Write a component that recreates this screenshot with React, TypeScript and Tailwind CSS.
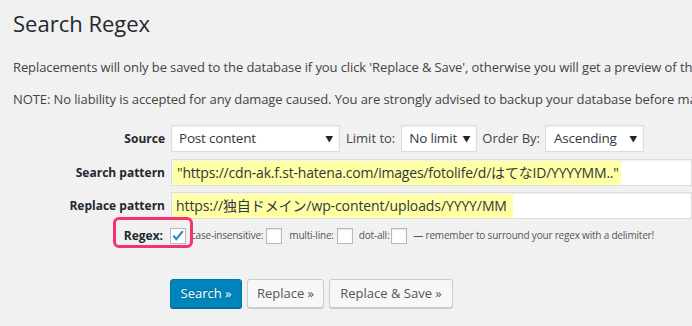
import React from 'react'

const font = { fontFamily: '"Open Sans", "Noto Sans CJK JP", sans-serif' }

function Select({ label, width, pad }: { label: string; width: string; pad: string }) {
  return (
    <div
      className={`${width} h-[27px] flex items-center justify-between ${pad} bg-white border border-[#ddd] shadow-[inset_0_1px_2px_rgba(0,0,0,0.07)] text-[13.5px] tracking-[-0.2px] text-[#32373c]`}
    >
      <span>{label}</span>
      <span className="text-[8px] text-[#222]">▼</span>
    </div>
  )
}

function Box() {
  return <span className="block w-[16px] h-[16px] bg-white border border-[#b4b9be] shadow-[inset_0_1px_2px_rgba(0,0,0,0.1)]" />
}

function Button({ children, primary, width }: { children: React.ReactNode; primary?: boolean; width: string }) {
  return (
    <button
      className={
        primary
          ? `${width} h-[29px] rounded-[3px] bg-[#0085ba] border border-[#0073aa] shadow-[0_1px_0_#006799] text-white text-[13px] [text-shadow:0_-1px_1px_#006799]`
          : `${width} h-[29px] rounded-[3px] bg-[#f7f7f7] border border-[#ccc] shadow-[0_1px_0_#ccc] text-[#555] text-[13px]`
      }
    >
      {children}
    </button>
  )
}

export default function App() {
  return (
    <div className="relative w-[692px] h-[326px] overflow-hidden bg-[#f1f1f1] text-[#444]" style={font}>
      <div className="pl-[13px] pt-[9px]">
        <h1 className="text-[22px] leading-[29px] text-[#23282d] font-normal">Search Regex</h1>
        <p className="mt-[19px] text-[13px] leading-[20px] tracking-[-0.1px] whitespace-nowrap">
          Replacements will only be saved to the database if you click 'Replace &amp; Save', otherwise you will get a preview of the results.
        </p>
        <p className="mt-[12px] text-[13px] leading-[20px] tracking-[-0.1px] whitespace-nowrap">
          NOTE: No liability is accepted for any damage caused. You are strongly advised to backup your database before making any changes.
        </p>
      </div>

      <div className="mt-[16px] flex flex-col">
        <div className="flex items-center h-[27px]">
          <div className="w-[165px] shrink-0 text-right text-[12px] font-bold text-[#23282d]">Source</div>
          <div className="ml-[6px] flex items-center">
            <Select label="Post content" width="w-[169px]" pad="pl-[7px] pr-[6px]" />
            <span className="ml-[6px] text-[13px]">Limit to:</span>
            <div className="ml-[6px]">
              <Select label="No limit" width="w-[76px]" pad="pl-[7px] pr-[6px]" />
            </div>
            <span className="ml-[5px] text-[13px]">Order By:</span>
            <div className="ml-[5px]">
              <Select label="Ascending" width="w-[99px]" pad="pl-[8px] pr-[6px]" />
            </div>
          </div>
        </div>

        <div className="flex items-center h-[27px] mt-[7px]">
          <div className="w-[165px] shrink-0 text-right text-[12px] font-bold text-[#23282d]">Search pattern</div>
          <div className="ml-[6px] flex-1 h-[27px] flex items-center pl-[1px] bg-white border border-[#ddd] shadow-[inset_0_1px_2px_rgba(0,0,0,0.07)] whitespace-nowrap overflow-hidden">
            <span className="bg-[#ffffa6] h-[24px] leading-[24px] pl-[4px] pr-[2px] text-[14px] tracking-[-0.2px] text-[#32373c]">
              "https://cdn-ak.f.st-hatena.com/images/fotolife/d/はてなID/YYYYMM.."
            </span>
          </div>
        </div>

        <div className="flex items-center h-[27px] mt-[6px]">
          <div className="w-[165px] shrink-0 text-right text-[12px] font-bold text-[#23282d]">Replace pattern</div>
          <div className="ml-[6px] flex-1 h-[27px] flex items-center pl-[1px] bg-white border border-[#ddd] shadow-[inset_0_1px_2px_rgba(0,0,0,0.07)] whitespace-nowrap overflow-hidden">
            <span className="bg-[#ffffa6] h-[24px] leading-[24px] pl-[3px] pr-[6px] text-[14px] tracking-[-0.1px] text-[#32373c]">
              https://独自ドメイン/wp-content/uploads/YYYY/MM
            </span>
          </div>
        </div>

        <div className="flex items-center h-[31px] mt-[1px]">
          <div className="w-[163px] shrink-0 flex justify-end">
            <span className="text-[12px] font-bold text-[#23282d]">Regex:</span>
          </div>
          <div className="ml-[7px] flex items-center text-[10px] tracking-[-0.2px] text-[#555] whitespace-nowrap">
            <span className="flex items-center justify-center w-[16px] h-[16px] bg-white border border-[#b4b9be]">
              <svg width="12" height="11" viewBox="0 0 12 11" className="text-[#1e8cbe]">
                <path d="M1.3 5.6 L4.3 9.2 L10.8 1.2" fill="none" stroke="currentColor" strokeWidth="2.1" />
              </svg>
            </span>
            <span className="ml-[5px]">case-insensitive:</span>
            <span className="ml-[3px]"><Box /></span>
            <span className="ml-[7px]">multi-line:</span>
            <span className="ml-[3px]"><Box /></span>
            <span className="ml-[6px]">dot-all:</span>
            <span className="ml-[2px]"><Box /></span>
            <span className="ml-[6px]">— remember to surround your regex with a delimiter!</span>
          </div>
        </div>
      </div>

      <div className="ml-[170px] mt-[28px] flex gap-[5px]">
        <Button primary width="w-[72px]">Search »</Button>
        <Button width="w-[77px]">Replace »</Button>
        <Button width="w-[124px]">Replace &amp; Save »</Button>
      </div>

      <div className="absolute left-[113px] top-[217px] w-[80px] h-[31px] rounded-[6px] border-[3px] border-[#f7336f] pointer-events-none" />
    </div>
  )
}
